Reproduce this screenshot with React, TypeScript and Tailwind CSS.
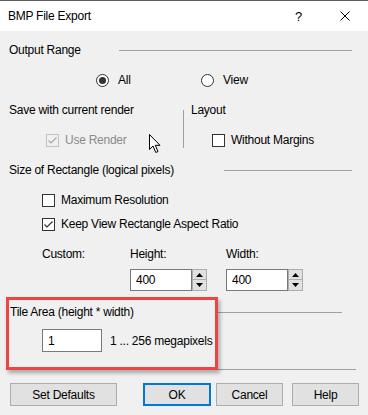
import React from 'react';

const FONT = { fontFamily: '"Segoe UI", "Liberation Sans", Arial, sans-serif' };

function Radio({ checked }: { checked?: boolean }) {
  return (
    <span className="w-[13px] h-[13px] rounded-full border border-[#333] bg-white flex items-center justify-center shrink-0">
      {checked && <span className="w-[7px] h-[7px] rounded-full bg-[#333]" />}
    </span>
  );
}

function Check({ checked, disabled }: { checked?: boolean; disabled?: boolean }) {
  return (
    <span
      className={
        'w-[13px] h-[13px] border flex items-center justify-center shrink-0 ' +
        (disabled ? 'border-[#c2c2c2] bg-[#f0f0f0]' : 'border-[#333] bg-white')
      }
    >
      {checked && (
        <svg width="11" height="11" viewBox="0 0 11 11">
          <path d="M1.5 5.5 L4 8 L9.5 2.5" fill="none" stroke={disabled ? '#a8a8a8' : '#333'} strokeWidth="1.2" />
        </svg>
      )}
    </span>
  );
}

function Header({ text, lineW, pr = 16, pl = 9 }: { text: string; lineW: number; pr?: number; pl?: number }) {
  return (
    <div className="h-4 flex items-center" style={{ paddingLeft: pl, paddingRight: pr }}>
      <span>{text}</span>
      <div className="ml-auto h-px bg-[#a0a0a0]" style={{ width: lineW }} />
    </div>
  );
}

function Spin() {
  return (
    <div className="w-[15px] h-[22px] flex flex-col">
      <div className="h-[11px] border border-[#adadad] bg-[#e1e1e1] flex items-center justify-center">
        <svg width="7" height="4" viewBox="0 0 7 4"><path d="M0 4 L3.5 0 L7 4 Z" fill="#000" /></svg>
      </div>
      <div className="h-[11px] border border-[#adadad] border-t-0 bg-[#e1e1e1] flex items-center justify-center">
        <svg width="7" height="4" viewBox="0 0 7 4"><path d="M0 0 L3.5 4 L7 0 Z" fill="#000" /></svg>
      </div>
    </div>
  );
}

function NumberBox({ value }: { value: string }) {
  return (
    <div className="flex">
      <div className="w-[62px] h-[22px] border border-[#7a7a7a] bg-white flex items-center pl-[5px]">{value}</div>
      <Spin />
    </div>
  );
}

function Button({ label, w, primary }: { label: string; w: number; primary?: boolean }) {
  return (
    <div
      className={
        'h-[23px] bg-[#e1e1e1] flex items-center justify-center ' +
        (primary ? 'border-2 border-[#0078d7]' : 'border border-[#adadad]')
      }
      style={{ width: w }}
    >
      {label}
    </div>
  );
}

export default function App() {
  return (
    <div className="relative w-[368px] h-[415px] overflow-hidden bg-[#f0f0f0] text-[12px] tracking-[-0.25px] text-black leading-none" style={FONT}>
      {/* title bar */}
      <div className="h-[31px] bg-white border-t border-[#5c5c5c] flex items-center pl-[8px]">
        <span>BMP File Export</span>
        <span className="ml-auto mr-[38px] text-[13px]">?</span>
        <svg className="mr-[18px]" width="10" height="10" viewBox="0 0 10 10">
          <path d="M0.5 0.5 L9.5 9.5 M9.5 0.5 L0.5 9.5" stroke="#000" strokeWidth="1" />
        </svg>
      </div>

      <div className="mt-[11px]">
        <Header text="Output Range" lineW={233} />
      </div>

      <div className="mt-[14px] h-4 flex items-center pl-[96px]">
        <div className="w-[105px] flex items-center gap-[9px]">
          <Radio checked />
          <span>All</span>
        </div>
        <div className="flex items-center gap-[9px]">
          <Radio />
          <span>View</span>
        </div>
      </div>

      <div className="mt-[14px] flex">
        <div className="w-[183px]">
          <div className="h-4 flex items-center pl-[9px]">Save with current render</div>
          <div className="mt-[14px] h-4 flex items-center pl-[46px] gap-[6px] text-[#8a8a8a]">
            <Check checked disabled />
            <span>Use Render</span>
          </div>
        </div>
        <div className="w-px bg-[#a0a0a0] mt-[8px]" />
        <div>
          <div className="h-4 flex items-center pl-[7px]">Layout</div>
          <div className="mt-[14px] h-4 flex items-center pl-[28px] gap-[6px]">
            <Check />
            <span>Without Margins</span>
          </div>
        </div>
      </div>

      <div className="mt-[14px]">
        <Header text="Size of Rectangle (logical pixels)" lineW={128} />
      </div>

      <div className="mt-[14px] h-4 flex items-center pl-[42px] gap-[6px]">
        <Check />
        <span>Maximum Resolution</span>
      </div>
      <div className="mt-[8px] h-4 flex items-center pl-[42px] gap-[6px]">
        <Check checked />
        <span>Keep View Rectangle Aspect Ratio</span>
      </div>

      <div className="mt-[14px] h-4 flex items-center pl-[42px]">
        <span className="w-[88px]">Custom:</span>
        <span className="w-[96px]">Height:</span>
        <span>Width:</span>
      </div>
      <div className="mt-[7px] flex pl-[130px] gap-[19px]">
        <NumberBox value="400" />
        <NumberBox value="400" />
      </div>

      <div className="mt-[13px]">
        <Header text="Tile Area (height * width)" lineW={126} pl={10} pr={26} />
      </div>
      <div className="mt-[9px] flex items-center pl-[42px]">
        <div className="w-[60px] h-[23px] border border-[#7a7a7a] bg-white flex items-center pl-[5px]">1</div>
        <span className="ml-[8px]">1 ... 256 megapixels</span>
      </div>

      <div className="mt-[17px] ml-[8px] mr-[12px] h-px bg-[#a0a0a0]" />

      <div className="mt-[13px] flex pl-[10px]">
        <Button label="Set Defaults" w={107} />
        <div className="ml-[26px]">
          <Button label="OK" w={68} primary />
        </div>
        <div className="ml-[5px]">
          <Button label="Cancel" w={67} />
        </div>
        <div className="ml-[9px]">
          <Button label="Help" w={67} />
        </div>
      </div>

      {/* annotation highlight */}
      <div className="absolute left-[6px] top-[297px] w-[212px] h-[73px] border-[3px] border-[#ef4444] shadow-[2px_3px_4px_rgba(0,0,0,0.3)]" />

      {/* mouse cursor */}
      <svg className="absolute left-[149px] top-[134px]" width="13" height="20" viewBox="0 0 13 20">
        <path d="M0.5 0.5 L0.5 15.5 L4 12 L6.8 18.5 L9 17.5 L6.3 11.3 L11 11.3 Z" fill="#fff" stroke="#000" strokeWidth="1" strokeLinejoin="round" />
      </svg>
    </div>
  );
}
